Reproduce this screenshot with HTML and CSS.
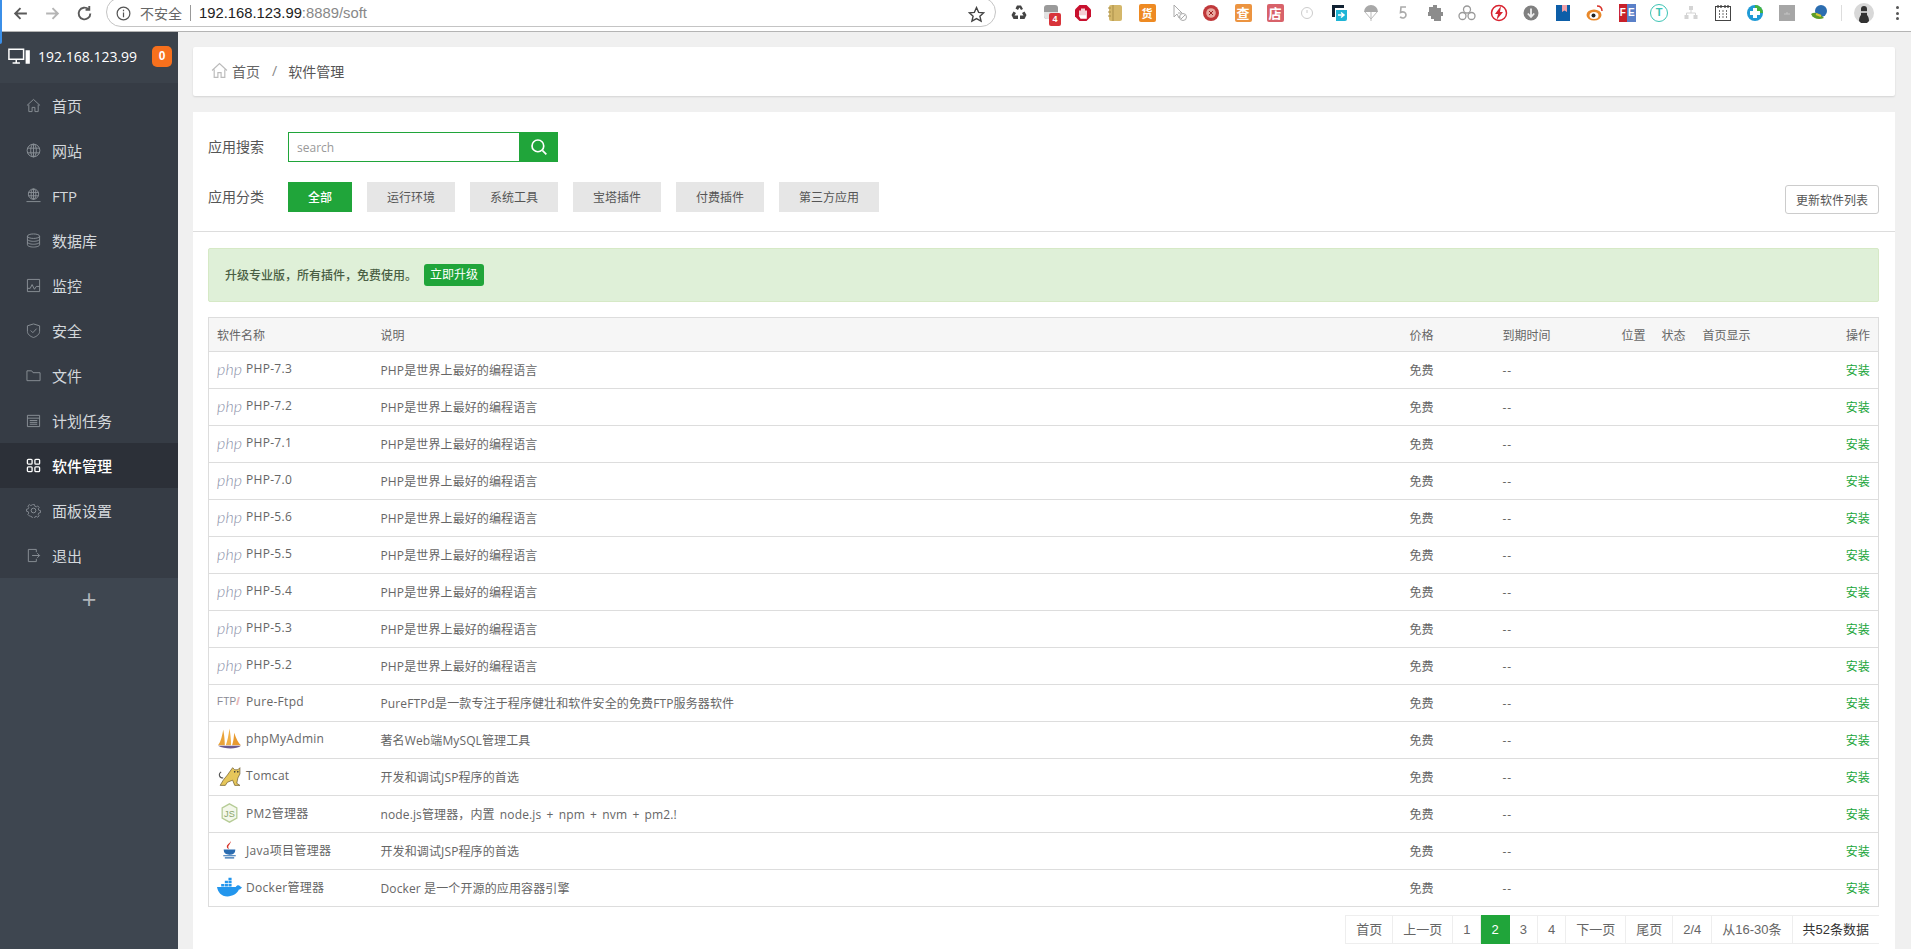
FILE: index.html
```html
<!DOCTYPE html>
<html lang="zh-CN">
<head>
<meta charset="utf-8">
<title>软件管理</title>
<link rel="stylesheet" href="styles.css">
</head>
<body>
<svg class="defs" width="0" height="0">
  <defs>
    <symbol id="i-home" viewBox="0 0 16 16"><path d="M1 8 8 1.500 15 8M3 7v7.500h3.500V10h3v4.500H13V7"/></symbol>
    <symbol id="i-globe" viewBox="0 0 16 16"><circle cx="8" cy="8" r="6.800"/><ellipse cx="8" cy="8" rx="3" ry="6.800"/><path d="M1.500 5.500h13M1.500 10.500h13M8 1.200v13.600"/></symbol>
    <symbol id="i-ftp" viewBox="0 0 16 16"><circle cx="8" cy="6.500" r="5.500"/><ellipse cx="8" cy="6.500" rx="2.500" ry="5.500"/><path d="M2.600 4.700h10.800M2.600 8.300h10.800M8 1v11M0.500 14.500h15"/></symbol>
    <symbol id="i-db" viewBox="0 0 16 16"><ellipse cx="8" cy="3.400" rx="6.500" ry="2.400"/><path d="M1.500 3.400v9.200c0 1.300 2.900 2.400 6.500 2.400s6.500-1.100 6.500-2.400V3.400M1.500 6.500c0 1.300 2.900 2.400 6.500 2.400s6.500-1.100 6.500-2.400M1.500 9.600c0 1.300 2.900 2.400 6.500 2.400s6.500-1.100 6.500-2.400"/></symbol>
    <symbol id="i-mon" viewBox="0 0 16 16"><path d="M1.500 1.500h13v13h-13zM1.500 11h3l2-4 2.500 5 2-3h3.500"/></symbol>
    <symbol id="i-shield" viewBox="0 0 16 16"><path d="M8 1 14.500 3v6c0 3-3 5.300-6.500 6.500C4.500 14.300 1.500 12 1.500 9V3zM5 8l2.300 2.300L11.300 6"/></symbol>
    <symbol id="i-folder" viewBox="0 0 16 16"><path d="M1 3h5l1.500 2H15v8.500H1z"/></symbol>
    <symbol id="i-cal" viewBox="0 0 16 16"><path d="M1.500 2.500h13v12h-13zM1.500 5.500h13M4 8h8M4 10h8M4 12h8"/></symbol>
    <symbol id="i-apps" viewBox="0 0 16 16"><rect x="1.500" y="1.500" width="5" height="5" rx="1"/><rect x="9.500" y="1.500" width="5" height="5" rx="1"/><rect x="1.500" y="9.500" width="5" height="5" rx="1"/><rect x="9.500" y="9.500" width="5" height="5" rx="1"/></symbol>
    <symbol id="i-gear" viewBox="0 0 16 16"><circle cx="8" cy="8" r="2.500"/><path d="M6.800 1h2.400l.4 2 1.700.7 1.700-1.100 1.700 1.700-1.100 1.700.7 1.700 2 .4v2.400l-2 .4-.7 1.700 1.100 1.700-1.700 1.700-1.700-1.100-1.700.7-.4 2H6.800l-.4-2-1.700-.7L3 14.400l-1.700-1.700 1.100-1.700-.7-1.700-2-.4V6.500l2-.4.7-1.700L1.300 2.700 3 1l1.700 1.100 1.700-.7z" transform="translate(.8 .8) scale(.9)"/></symbol>
    <symbol id="i-exit" viewBox="0 0 16 16"><path d="M11 4.500V1.500H2.500v13H11v-3M6.500 8h8M12 5.500 14.500 8 12 10.500"/></symbol>
  </defs>
</svg>

<div class="edge-mark"></div>

<header class="toolbar">
  <button class="nav-btn"><svg class="nav-ico dark" viewBox="0 0 16 16"><path d="M14 8H3M8 3 3 8l5 5"/></svg></button>
  <button class="nav-btn"><svg class="nav-ico light" viewBox="0 0 16 16"><path d="M2 8h11M8 3l5 5-5 5"/></svg></button>
  <button class="nav-btn"><svg class="nav-ico dark" viewBox="0 0 16 16"><path d="M13.500 8A5.500 5.500 0 1 1 11.800 4M12.500 1v3.600H9"/></svg></button>
  <div class="urlbar">
    <svg class="info-ico" viewBox="0 0 16 16"><circle cx="8" cy="8" r="6.800"/><path d="M8 7v5M8 4v1.600"/></svg>
    <span class="insecure">不安全</span>
    <span class="url-sep"></span>
    <span class="url-host">192.168.123.99</span><span class="url-rest">:8889/soft</span>
    <svg class="star" viewBox="0 0 16 16"><path d="M8 1.500 10 6l4.800.4-3.600 3.200 1.100 4.700L8 11.800l-4.300 2.500 1.100-4.700L1.200 6.400 6 6z"/></svg>
  </div>
  <div class="exts">
    <span class="ext"><svg viewBox="0 0 20 20"><path d="M8 2.500h4l2 3.500-2 1L10.500 4.500 9 7 6.500 5.500zM2.500 12l2-3.500L7 10l-1.500 2.500h3.500V16H4.500zM17.500 12l-2-3.500L13 10l1.500 2.500H11V16h4.500z" fill="#444"/></svg></span>
    <span class="ext"><svg viewBox="0 0 20 20"><rect x="3" y="2" width="14" height="14" rx="3" fill="#9a9a9a"/><path d="M3 9h14v4a3 3 0 0 1-3 3H6a3 3 0 0 1-3-3z" fill="#e2e2e2"/></svg><span class="ext-count">4</span></span>
    <span class="ext"><svg viewBox="0 0 20 20"><path d="M6.500 2h7L18 6.500v7L13.500 18h-7L2 13.500v-7z" fill="#c8102e"/><path d="M7 14V7.500M9 14V5.500M11 14V5.500M13 14V7.500M7 13h6v2H8z" stroke="#fff" stroke-width="1.600" fill="#fff"/></svg></span>
    <span class="ext"><svg viewBox="0 0 20 20"><rect x="4" y="2" width="13" height="16" rx="2" fill="#d4b76a"/><path d="M8 2v16M3 5h3M3 9h3M3 13h3" stroke="#a98e48"/></svg></span>
    <span class="ext"><span class="ext-tile orange">货</span></span>
    <span class="ext"><svg viewBox="0 0 20 20" fill="none" stroke="#aaa"><path d="M5 2v12l3-3 2 4 1.500-.8"/><path d="M5 2l8 8h-4"/><circle cx="14" cy="14" r="3.500"/><path d="M12 16l4-4"/></svg></span>
    <span class="ext"><svg viewBox="0 0 20 20"><circle cx="10" cy="10" r="8" fill="#c0383a"/><circle cx="10" cy="10" r="4.800" fill="#e9a8a0"/><path d="M8 8l4 4M12 8l-4 4" stroke="#a02020"/></svg></span>
    <span class="ext"><span class="ext-tile amber">查</span></span>
    <span class="ext"><span class="ext-tile rose">店</span></span>
    <span class="ext"><svg viewBox="0 0 20 20" fill="none" stroke="#ccc"><circle cx="10" cy="10" r="5.500"/><path d="M10 7v3"/></svg></span>
    <span class="ext"><svg viewBox="0 0 20 20"><path d="M3 2h12v3H6v9H3z" fill="#123"/><path d="M7 7h11v9a2 2 0 0 1-2 2H7z" fill="#1fb5d6"/><path d="M9 12h5M12 9.500l3 2.500-3 2.500" stroke="#fff" stroke-width="1.500" fill="none"/></svg></span>
    <span class="ext"><svg viewBox="0 0 20 20"><path d="M3 9a7 7 0 0 1 14 0z" fill="#a8a8a8"/><path d="M4 9l6 7 6-7M10 9v9" stroke="#bbb" fill="none"/></svg></span>
    <span class="ext"><svg viewBox="0 0 20 20" fill="none" stroke="#aaa" stroke-width="1.600"><path d="M13 4H8L7.500 9.500c3-1.500 5.500 0 5.500 2.500 0 2.500-3 4-6 2"/></svg></span>
    <span class="ext"><svg viewBox="0 0 20 20"><path d="M4 4h4V2h4v3h4v4h2v4h-2v5H9v-2H6v-3H3V9h1z" fill="#8c8c8c"/></svg></span>
    <span class="ext"><svg viewBox="0 0 20 20" fill="none" stroke="#999" stroke-width="1.300"><circle cx="10" cy="6.500" r="3.500"/><circle cx="5.500" cy="13" r="3.500"/><circle cx="14.500" cy="13" r="3.500"/></svg></span>
    <span class="ext"><svg viewBox="0 0 20 20"><circle cx="10" cy="10" r="7.500" fill="none" stroke="#d8222f" stroke-width="1.500"/><path d="M12 3 6 11h3l-1.500 6L14 9h-3z" fill="#d8222f"/></svg></span>
    <span class="ext"><svg viewBox="0 0 20 20"><circle cx="10" cy="10" r="7.500" fill="#808080"/><path d="M10 5.500v8M6.800 10.500 10 14l3.200-3.500" stroke="#eee" stroke-width="1.800" fill="none"/></svg></span>
    <span class="ext"><svg viewBox="0 0 20 20"><rect x="3" y="2" width="14" height="16" fill="#0d5ea8"/><path d="M9 2h5v7l-2.500-1.500L9 9z" fill="#f0a0a8"/></svg></span>
    <span class="ext"><svg viewBox="0 0 20 20"><ellipse cx="9" cy="12" rx="7.500" ry="5.500" fill="#e8882a"/><ellipse cx="9" cy="12.500" rx="4.500" ry="3.500" fill="#fff"/><circle cx="8.500" cy="12.500" r="2" fill="#222"/><path d="M12 3c3 0 5 2 5 5" stroke="#d8322a" stroke-width="1.500" fill="none"/></svg></span>
    <span class="ext"><span class="ext-fe"><span class="ext-fe-a">F</span><span class="ext-fe-b">E</span></span></span>
    <span class="ext"><span class="ext-t">T</span></span>
    <span class="ext"><svg viewBox="0 0 20 20" fill="#d4d4d4"><rect x="8" y="3" width="4" height="4"/><rect x="3.500" y="12" width="4" height="4"/><rect x="12.500" y="12" width="4" height="4"/><path d="M10 7v3M5.500 12v-2h9v2" stroke="#d4d4d4" fill="none"/></svg></span>
    <span class="ext"><svg viewBox="0 0 20 20"><rect x="2.500" y="3.500" width="15" height="14" fill="#fff" stroke="#444"/><path d="M5 2v3M8 2v3M12 2v3M15 2v3M6 8h1M9.500 8h1M13 8h1M6 11h1M9.500 11h1M13 11h1M6 14h1M9.500 14h1M13 14h1" stroke="#444" stroke-width="1.300"/></svg></span>
    <span class="ext"><svg viewBox="0 0 20 20"><circle cx="10" cy="10" r="8" fill="#1f9ad6"/><path d="M10 2a8 8 0 0 1 8 8h-8z" fill="#45b43c"/><path d="M8 5h4v3h3v4h-3v3H8v-3H5V8h3z" fill="#fff"/></svg></span>
    <span class="ext"><svg viewBox="0 0 20 20"><rect x="2" y="2" width="16" height="16" fill="#a6a6a6"/><path d="M7 11h6M10 9v2" stroke="#c4c4c4"/></svg></span>
    <span class="ext"><svg viewBox="0 0 20 20"><circle cx="12" cy="8" r="6" fill="#2c6db0"/><path d="M2 11c4-3 9 0 13 4-5 2-11 1-13-4z" fill="#5f9e26"/><path d="M7 11l5 2" stroke="#d8c83a" stroke-width="2"/></svg></span>
  </div>
  <span class="tool-sep"></span>
  <span class="avatar"><svg viewBox="0 0 20 20"><circle cx="10" cy="10" r="10" fill="#d8d8d8"/><path d="M5 18c0-3 1-5 2-6V6a3 3 0 0 1 6 0v6c1 1 2 3 2 6l-2 2H7z" fill="#333"/><path d="M7 8h6v2H7z" fill="#bbb"/></svg></span>
  <span class="kebab"><i></i><i></i><i></i></span>
</header>

<div class="shell">
  <aside class="sidebar">
    <div class="side-head">
      <svg class="side-monitor" viewBox="0 0 24 18"><path d="M1 1h16v11H1zM5 16h8M9 12v4"/><path class="tower" d="M20 3h3v13h-3z"/></svg>
      <span class="side-ip">192.168.123.99</span>
      <span class="side-badge">0</span>
    </div>
    <nav class="menu">
      <a class="menu-item"><svg class="menu-ico"><use href="#i-home"/></svg>首页</a>
      <a class="menu-item"><svg class="menu-ico"><use href="#i-globe"/></svg>网站</a>
      <a class="menu-item"><svg class="menu-ico"><use href="#i-ftp"/></svg>FTP</a>
      <a class="menu-item"><svg class="menu-ico"><use href="#i-db"/></svg>数据库</a>
      <a class="menu-item"><svg class="menu-ico"><use href="#i-mon"/></svg>监控</a>
      <a class="menu-item"><svg class="menu-ico"><use href="#i-shield"/></svg>安全</a>
      <a class="menu-item"><svg class="menu-ico"><use href="#i-folder"/></svg>文件</a>
      <a class="menu-item"><svg class="menu-ico"><use href="#i-cal"/></svg>计划任务</a>
      <a class="menu-item active"><svg class="menu-ico"><use href="#i-apps"/></svg>软件管理</a>
      <a class="menu-item"><svg class="menu-ico"><use href="#i-gear"/></svg>面板设置</a>
      <a class="menu-item"><svg class="menu-ico"><use href="#i-exit"/></svg>退出</a>
    </nav>
    <div class="side-add">+</div>
  </aside>

  <main class="content">
    <div class="crumb">
      <svg class="crumb-home"><use href="#i-home"/></svg>
      <span class="crumb-link">首页</span>
      <span class="crumb-sep">/</span>
      <span class="crumb-cur">软件管理</span>
    </div>

    <section class="panel">
      <div class="filters">
        <div class="filter-row">
          <span class="filter-label">应用搜索</span>
          <div class="search">
            <input class="search-input" type="text" placeholder="search">
            <button class="search-btn"><svg viewBox="0 0 16 16"><circle cx="7" cy="7" r="5.200"/><path d="M11 11l3.500 3.500"/></svg></button>
          </div>
        </div>
        <div class="filter-row second">
          <span class="filter-label">应用分类</span>
          <div class="cats">
            <a class="cat on">全部</a>
            <a class="cat">运行环境</a>
            <a class="cat">系统工具</a>
            <a class="cat">宝塔插件</a>
            <a class="cat">付费插件</a>
            <a class="cat">第三方应用</a>
          </div>
          <button class="refresh">更新软件列表</button>
        </div>
      </div>

      <div class="body">
        <div class="alert">
          <span class="alert-text">升级专业版，所有插件，免费使用。</span>
          <a class="alert-btn">立即升级</a>
        </div>

        <table class="soft">
          <colgroup>
            <col class="c-name"><col><col class="c-price"><col class="c-exp"><col class="c-pos"><col class="c-state"><col class="c-home"><col class="c-op">
          </colgroup>
          <thead>
            <tr><th>软件名称</th><th>说明</th><th>价格</th><th>到期时间</th><th>位置</th><th>状态</th><th>首页显示</th><th class="op">操作</th></tr>
          </thead>
          <tbody>
            <tr><td><div class="sw"><span class="logo-php">php</span><span class="sw-name">PHP-7.3</span></div></td><td>PHP是世界上最好的编程语言</td><td>免费</td><td class="dash">--</td><td></td><td></td><td></td><td class="op"><a>安装</a></td></tr>
            <tr><td><div class="sw"><span class="logo-php">php</span><span class="sw-name">PHP-7.2</span></div></td><td>PHP是世界上最好的编程语言</td><td>免费</td><td class="dash">--</td><td></td><td></td><td></td><td class="op"><a>安装</a></td></tr>
            <tr><td><div class="sw"><span class="logo-php">php</span><span class="sw-name">PHP-7.1</span></div></td><td>PHP是世界上最好的编程语言</td><td>免费</td><td class="dash">--</td><td></td><td></td><td></td><td class="op"><a>安装</a></td></tr>
            <tr><td><div class="sw"><span class="logo-php">php</span><span class="sw-name">PHP-7.0</span></div></td><td>PHP是世界上最好的编程语言</td><td>免费</td><td class="dash">--</td><td></td><td></td><td></td><td class="op"><a>安装</a></td></tr>
            <tr><td><div class="sw"><span class="logo-php">php</span><span class="sw-name">PHP-5.6</span></div></td><td>PHP是世界上最好的编程语言</td><td>免费</td><td class="dash">--</td><td></td><td></td><td></td><td class="op"><a>安装</a></td></tr>
            <tr><td><div class="sw"><span class="logo-php">php</span><span class="sw-name">PHP-5.5</span></div></td><td>PHP是世界上最好的编程语言</td><td>免费</td><td class="dash">--</td><td></td><td></td><td></td><td class="op"><a>安装</a></td></tr>
            <tr><td><div class="sw"><span class="logo-php">php</span><span class="sw-name">PHP-5.4</span></div></td><td>PHP是世界上最好的编程语言</td><td>免费</td><td class="dash">--</td><td></td><td></td><td></td><td class="op"><a>安装</a></td></tr>
            <tr><td><div class="sw"><span class="logo-php">php</span><span class="sw-name">PHP-5.3</span></div></td><td>PHP是世界上最好的编程语言</td><td>免费</td><td class="dash">--</td><td></td><td></td><td></td><td class="op"><a>安装</a></td></tr>
            <tr><td><div class="sw"><span class="logo-php">php</span><span class="sw-name">PHP-5.2</span></div></td><td>PHP是世界上最好的编程语言</td><td>免费</td><td class="dash">--</td><td></td><td></td><td></td><td class="op"><a>安装</a></td></tr>
            <tr><td><div class="sw"><span class="logo-ftp">FTP<b>//</b></span><span class="sw-name">Pure-Ftpd</span></div></td><td>PureFTPd是一款专注于程序健壮和软件安全的免费FTP服务器软件</td><td>免费</td><td class="dash">--</td><td></td><td></td><td></td><td class="op"><a>安装</a></td></tr>
            <tr><td><div class="sw"><svg class="logo" viewBox="0 0 24 20"><path d="M1 16C4 12 5 6 6 1c1 5 1.500 11 1.500 15z" fill="#e9a33a"/><path d="M8.500 16c1.500-4 2.500-9 3.500-16 1 6 1.500 11 1.500 16z" fill="#f0b048"/><path d="M14.500 16c1-3 1.500-6 2-12 2 6 4 10 6.500 12z" fill="#e89a30"/><path d="M1 16.500h22c-2 2-6 2.500-10 2.500S4 18.500 1 16.500z" fill="#6a5a90"/></svg><span class="sw-name">phpMyAdmin</span></div></td><td>著名Web端MySQL管理工具</td><td>免费</td><td class="dash">--</td><td></td><td></td><td></td><td class="op"><a>安装</a></td></tr>
            <tr><td><div class="sw"><svg class="logo" viewBox="0 0 24 20"><path d="M15 2l2 2h3l2-2v6l-2 4-1 5 3 2h-5l-2-5-5 2-2 3H3l3-5 4-5z" fill="#e6c65a" stroke="#5a4a20" stroke-width=".6"/><path d="M6 12C2 12 1 8 4 6" fill="none" stroke="#555"/><circle cx="17" cy="6" r=".8" fill="#333"/><circle cx="20" cy="6" r=".8" fill="#333"/></svg><span class="sw-name">Tomcat</span></div></td><td>开发和调试JSP程序的首选</td><td>免费</td><td class="dash">--</td><td></td><td></td><td></td><td class="op"><a>安装</a></td></tr>
            <tr><td><div class="sw"><svg class="logo" viewBox="0 0 24 24"><path d="M12 2 20 6.500v11L12 22l-8-4.500v-11z" fill="#f3f7ea" stroke="#b6cc96" stroke-width="1.400"/><text class="logo-js" x="12" y="16" text-anchor="middle">JS</text></svg><span class="sw-name">PM2管理器</span></div></td><td class="spaced">node.js管理器，内置 node.js + npm + nvm + pm2.!</td><td>免费</td><td class="dash">--</td><td></td><td></td><td></td><td class="op"><a>安装</a></td></tr>
            <tr><td><div class="sw"><svg class="logo" viewBox="0 0 24 20"><path d="M13 1c1 3-3 4-2 7 .3 1 1 1.500 1 1.500-2-.5-3-2-2.500-3.500C10 4 13 3.500 13 1z" fill="#d8352a"/><path d="M7 10h10c0 2-1 4-5 4s-5-2-5-4zM6 15.500h12M7.500 17.500h9" stroke="#2a6cb0" stroke-width="1.100" fill="#2a6cb0"/></svg><span class="sw-name">Java项目管理器</span></div></td><td>开发和调试JSP程序的首选</td><td>免费</td><td class="dash">--</td><td></td><td></td><td></td><td class="op"><a>安装</a></td></tr>
            <tr><td><div class="sw"><svg class="logo" viewBox="0 0 24 20"><path d="M0 10h18c1-2 3-2 4-1 .5.500 1 1 2 1-1 2-2 2.500-3 2.500-1.500 4-6 6.500-11 6.500C4 19 1 15 0 10z" fill="#2396ed"/><path d="M4 7h3v2.500H4zM7.500 7h3v2.500h-3zM11 7h3v2.500h-3zM7.500 4h3v2.500h-3zM11 4h3v2.500h-3zM11 1h3v2.500h-3z" fill="#2396ed"/></svg><span class="sw-name">Docker管理器</span></div></td><td>Docker 是一个开源的应用容器引擎</td><td>免费</td><td class="dash">--</td><td></td><td></td><td></td><td class="op"><a>安装</a></td></tr>
          </tbody>
        </table>

        <div class="pager">
          <a class="pg">首页</a><a class="pg">上一页</a><a class="pg">1</a><a class="pg cur">2</a><a class="pg">3</a><a class="pg">4</a><a class="pg">下一页</a><a class="pg">尾页</a><a class="pg">2/4</a><a class="pg">从16-30条</a><a class="pg total">共52条数据</a>
        </div>
      </div>
    </section>
  </main>
</div>
</body>
</html>
```

FILE: styles.css
```css
* { box-sizing: border-box; }
html, body { margin: 0; height: 100%; }
body {
  height: 949px;
  overflow: hidden;
  display: flex;
  flex-direction: column;
  background: #f0f0f0;
  color: #666;
  font-family: "Open Sans", "Noto Sans CJK SC", sans-serif;
  font-size: 12px;
}
.defs { position: absolute; }
.edge-mark {
  position: absolute;
  left: 0;
  top: 0;
  width: 2px;
  height: 44px;
  background: #3b8fe8;
  border-radius: 0 0 2px 0;
}

/* browser toolbar */
.toolbar {
  flex: 0 0 32px;
  display: flex;
  align-items: flex-start;
  padding-left: 4px;
  background: #fff;
  border-bottom: 1px solid #b4b4b4;
  overflow: hidden;
}
.nav-btn {
  width: 32px;
  height: 26px;
  padding: 0;
  border: 0;
  background: none;
  display: flex;
  align-items: center;
  justify-content: center;
}
.nav-ico { width: 17px; height: 17px; fill: none; stroke-width: 1.800; }
.nav-ico.dark { stroke: #5a5a5a; }
.nav-ico.light { stroke: #b5b5b5; }
.urlbar {
  width: 890px;
  height: 30px;
  margin: -3px 0 0 6px;
  padding: 2px 10px 0 9px;
  display: flex;
  align-items: center;
  border: 1px solid #c4c4c4;
  border-radius: 15px;
  font-family: "Liberation Sans", "Noto Sans CJK SC", sans-serif;
  font-size: 14px;
  flex: none;
}
.info-ico { width: 15px; height: 15px; fill: none; stroke: #555; stroke-width: 1.300; flex: none; }
.insecure { margin-left: 9px; color: #666; font-size: 14px; }
.url-sep { width: 1px; height: 16px; margin: 0 8px; background: #999; }
.url-host { color: #222; font-size: 14.800px; }
.url-rest { color: #888; font-size: 14.800px; }
.star { width: 17px; height: 17px; margin-left: auto; margin-top: 2px; fill: none; stroke: #444; stroke-width: 1.300; }
.exts { display: flex; margin-left: 7px; flex: none; }
.ext {
  position: relative;
  width: 32px;
  height: 26px;
  display: flex;
  align-items: center;
  justify-content: center;
}
.ext svg { width: 20px; height: 20px; }
.ext-count {
  position: absolute;
  left: 14px;
  top: 13px;
  width: 12px;
  height: 13px;
  border-radius: 2px;
  background: #d8343a;
  color: #fff;
  font: bold 9px/13px "Liberation Sans", sans-serif;
  text-align: center;
}
.ext-tile {
  width: 17px;
  height: 18px;
  border-radius: 2px;
  color: #fff;
  font: bold 13px/18px "Noto Sans CJK SC", sans-serif;
  text-align: center;
}
.ext-tile.orange { background: #ee8a22; font-size: 11px; }
.ext-tile.amber { background: #ec9440; }
.ext-tile.rose { background: #d8626a; }
.ext-fe { display: flex; width: 17px; height: 18px; font: bold 10px/18px "Liberation Sans", sans-serif; color: #fff; text-align: center; }
.ext-fe-a { flex: 1; background: #c8202a; }
.ext-fe-b { flex: 1; background: #5a80c8; }
.ext-t {
  width: 18px;
  height: 18px;
  border: 1.500px solid #3cc4b4;
  border-radius: 50%;
  color: #3cc4b4;
  font: bold 11px/15px "Liberation Sans", sans-serif;
  text-align: center;
}
.tool-sep { width: 1px; height: 16px; margin: 5px 6px 0; background: #ddd; flex: none; }
.avatar { width: 32px; height: 26px; display: flex; align-items: center; justify-content: center; flex: none; }
.avatar svg { width: 20px; height: 20px; }
.kebab { width: 24px; height: 26px; margin-left: 5px; display: flex; flex-direction: column; align-items: center; justify-content: center; gap: 2.500px; flex: none; }
.kebab i { width: 3px; height: 3px; border-radius: 50%; background: #555; }

/* shell */
.shell { flex: 1; display: flex; min-height: 0; }

/* sidebar */
.sidebar { width: 178px; flex: none; background: #3e4650; display: flex; flex-direction: column; }
.side-head {
  height: 51px;
  padding: 0 0 3px 8px;
  display: flex;
  align-items: center;
  background: #3b424b;
  flex: none;
}
.side-monitor { width: 22px; height: 17px; fill: none; stroke: #fff; stroke-width: 1.600; flex: none; }
.side-monitor .tower { fill: #fff; }
.side-ip { margin-left: 8px; color: #fff; font-size: 14px; }
.side-badge {
  width: 20px;
  height: 21px;
  margin-left: auto;
  margin-right: 6px;
  border-radius: 5px;
  background: #f7701d;
  color: #fff;
  font: bold 12px/21px "Liberation Sans", sans-serif;
  text-align: center;
}
.menu { background: #363c45; flex: none; }
.menu-item {
  height: 45px;
  padding-left: 26px;
  display: flex;
  align-items: center;
  gap: 11px;
  color: #d4d8dc;
  font-size: 15px;
}
.menu-item.active { background: #2c3038; color: #fff; font-weight: 500; }
.menu-ico { width: 15px; height: 15px; fill: none; stroke: #8b9198; stroke-width: 1; flex: none; }
.menu-item.active .menu-ico { stroke: #fff; stroke-width: 1.400; }
.side-add { height: 40px; margin-top: 1px; color: #b0b5ba; font-size: 25px; line-height: 40px; text-align: center; font-family: "Liberation Sans", sans-serif; }

/* main */
.content { flex: 1; min-width: 0; padding: 15px 16px 0 15px; display: flex; flex-direction: column; }
.crumb {
  height: 49px;
  flex: none;
  padding: 0 0 2px 18px;
  display: flex;
  align-items: center;
  background: #fff;
  box-shadow: 0 1px 2px rgba(0,0,0,.12);
  border-radius: 2px;
  font-size: 13px;
  color: #555;
}
.crumb-home { width: 17px; height: 17px; fill: none; stroke: #bbb; stroke-width: 1.100; flex: none; }
.crumb-link { margin-left: 4px; font-size: 14px; color: #666; }
.crumb-sep { margin: 0 11px 0 12px; font-size: 14px; color: #888; }
.crumb-cur { font-size: 14px; color: #555; }

.panel { margin-top: 16px; flex: 1; background: #fff; display: flex; flex-direction: column; min-height: 0; }
.filters { height: 120px; padding: 20px 16px 0 15px; border-bottom: 1px solid #ddd; flex: none; }
.filter-row { display: flex; align-items: center; height: 30px; }
.filter-row.second { margin-top: 20px; }
.filter-label { width: 80px; padding-bottom: 2px; font-size: 14px; color: #555; flex: none; }
.search { display: flex; width: 270px; height: 30px; }
.search-input {
  width: 231px;
  height: 30px;
  padding: 0 8px;
  border: 1px solid #20a53a;
  border-right: 0;
  outline: 0;
  font: 12px "Open Sans", sans-serif;
  color: #555;
}
.search-input::placeholder { color: #999; }
.search-btn {
  width: 39px;
  height: 30px;
  padding: 0;
  border: 0;
  background: #20a53a;
  display: flex;
  align-items: center;
  justify-content: center;
}
.search-btn svg { width: 18px; height: 18px; fill: none; stroke: #fff; stroke-width: 1.500; }
.cats { display: flex; gap: 15px; }
.cat {
  height: 30px;
  padding: 0 20px;
  background: #e6e6e6;
  color: #555;
  font-size: 12px;
  line-height: 32px;
}
.cat.on { background: #20a53a; color: #fff; font-weight: 500; }
.refresh {
  width: 94px;
  height: 29px;
  margin: 5px 0 0 auto;
  padding: 0;
  border: 1px solid #ccc;
  border-radius: 3px;
  background: #fff;
  color: #555;
  font: 12px "Open Sans", "Noto Sans CJK SC", sans-serif;
}

.body { padding: 16px 16px 0 15px; }
.alert {
  height: 54px;
  padding-left: 16px;
  display: flex;
  align-items: center;
  gap: 7px;
  background: #dff0d8;
  border: 1px solid #d6e9c6;
  border-radius: 2px;
}
.alert-text { color: #4a5f44; font-size: 12px; font-weight: 500; }
.alert-btn {
  width: 60px;
  height: 22px;
  border-radius: 3px;
  background: #20a53a;
  color: #fff;
  font-size: 12px;
  line-height: 22px;
  text-align: center;
}

.soft {
  width: 100%;
  margin-top: 15px;
  table-layout: fixed;
  border-collapse: collapse;
  border: 1px solid #ddd;
}
.c-name { width: 164px; }
.c-price { width: 93px; }
.c-exp { width: 119px; }
.c-pos { width: 40px; }
.c-state { width: 41px; }
.c-home { width: 106px; }
.c-op { width: 78px; }
.soft th {
  height: 34px;
  padding: 0 0 0 8px;
  background: #f6f6f6;
  border-bottom: 1px solid #ddd;
  color: #666;
  font-size: 12px;
  font-weight: 400;
  text-align: left;
}
.soft td {
  height: 37px;
  padding: 0 0 0 8px;
  border-bottom: 1px solid #ddd;
  color: #666;
  font-size: 12px;
  letter-spacing: .12px;
  white-space: nowrap;
  overflow: hidden;
}
.soft td.spaced { word-spacing: 2px; }
.soft td.dash { letter-spacing: 1px; }
.soft .op { padding-right: 8px; text-align: right; }
.soft .op a { color: #20a53a; }
.sw { display: flex; align-items: center; margin-top: -3px; }
.sw-name { margin-left: 4px; font-size: 12px; letter-spacing: .3px; color: #666; }
.logo { width: 25px; height: 22px; flex: none; }
.logo-php {
  width: 25px;
  flex: none;
  font: italic 300 16px/22px "Lato", sans-serif;
  color: #8c92aa;
}
.logo-ftp {
  width: 25px;
  flex: none;
  font: 10px/22px "Liberation Sans", sans-serif;
  color: #8a8a94;
  white-space: nowrap;
}
.logo-ftp b { font-weight: 400; color: #e4a8a8; letter-spacing: -2px; }
.logo-js {
  fill: #8aa56c;
  font: 10px "Liberation Sans", sans-serif;
}

.pager { display: flex; justify-content: flex-end; margin-top: 8px; height: 29px; }
.pg {
  padding: 0 10px;
  border: 1px solid #eee;
  border-left: 0;
  color: #666;
  font-size: 13px;
  line-height: 27px;
  font-family: "Liberation Sans", "Noto Sans CJK SC", sans-serif;
}
.pg:first-child { border-left: 1px solid #eee; }
.pg.cur { background: #20a53a; color: #fff; border-color: #20a53a; }
.pg.total { color: #333; border-right: 0; }
```
